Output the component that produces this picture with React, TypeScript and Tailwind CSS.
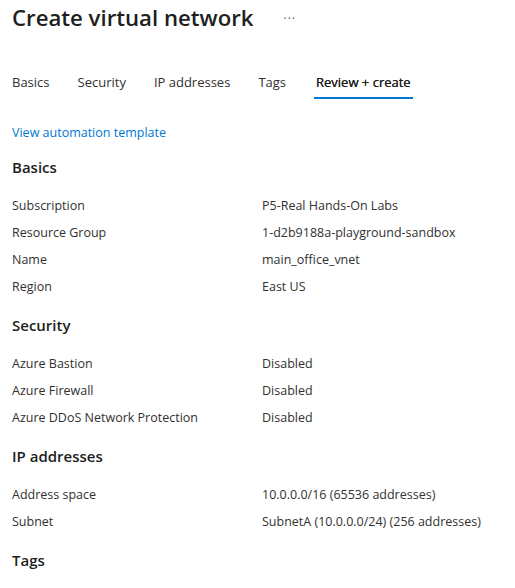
const TABS = ["Basics", "Security", "IP addresses", "Tags", "Review + create"];

type Row = [string, string];

const SECTIONS: { title: string; rows: Row[] }[] = [
  {
    title: "Basics",
    rows: [
      ["Subscription", "P5-Real Hands-On Labs"],
      ["Resource Group", "1-d2b9188a-playground-sandbox"],
      ["Name", "main_office_vnet"],
      ["Region", "East US"],
    ],
  },
  {
    title: "Security",
    rows: [
      ["Azure Bastion", "Disabled"],
      ["Azure Firewall", "Disabled"],
      ["Azure DDoS Network Protection", "Disabled"],
    ],
  },
  {
    title: "IP addresses",
    rows: [
      ["Address space", "10.0.0.0/16 (65536 addresses)"],
      ["Subnet", "SubnetA (10.0.0.0/24) (256 addresses)"],
    ],
  },
  { title: "Tags", rows: [] },
];

export default function App() {
  return (
    <div
      className="h-[588px] w-[515px] overflow-hidden bg-white px-3 text-[12.5px] text-[#323130]"
      style={{ fontFamily: '"Open Sans", "Noto Sans", sans-serif' }}
    >
      <header className="flex h-[37px] items-center gap-[30px]">
        <h1 className="text-[22.2px] font-semibold leading-none text-[#201f1e]">Create virtual network</h1>
        <span className="text-[12px] tracking-[1px] text-[#605e5c]">···</span>
      </header>
      <nav className="mt-[36px] flex gap-[28px] text-[13px]">
        {TABS.map((tab, i) => (
          <div
            key={tab}
            className={
              i === TABS.length - 1
                ? "border-b-2 border-[#0078d4] px-[2px] pb-[4px] text-[#201f1e] [text-shadow:0_0_0.3px_#201f1e]"
                : "pb-[6px] text-[#323130]"
            }
          >
            {tab}
          </div>
        ))}
      </nav>
      <a className="mt-[25px] block text-[#0078d4]">View automation template</a>
      {SECTIONS.map((section) => (
        <section key={section.title} className="mt-[14px] first-of-type:mt-[15px]">
          <h2 className="text-[15px] font-semibold leading-[20px] text-[#201f1e]">{section.title}</h2>
          <div className="mt-[16px] flex flex-col">
            {section.rows.map(([label, value]) => (
              <div key={label} className="grid h-[27px] grid-cols-[250px_1fr] items-center">
                <span>{label}</span>
                <span>{value}</span>
              </div>
            ))}
          </div>
        </section>
      ))}
    </div>
  );
}
